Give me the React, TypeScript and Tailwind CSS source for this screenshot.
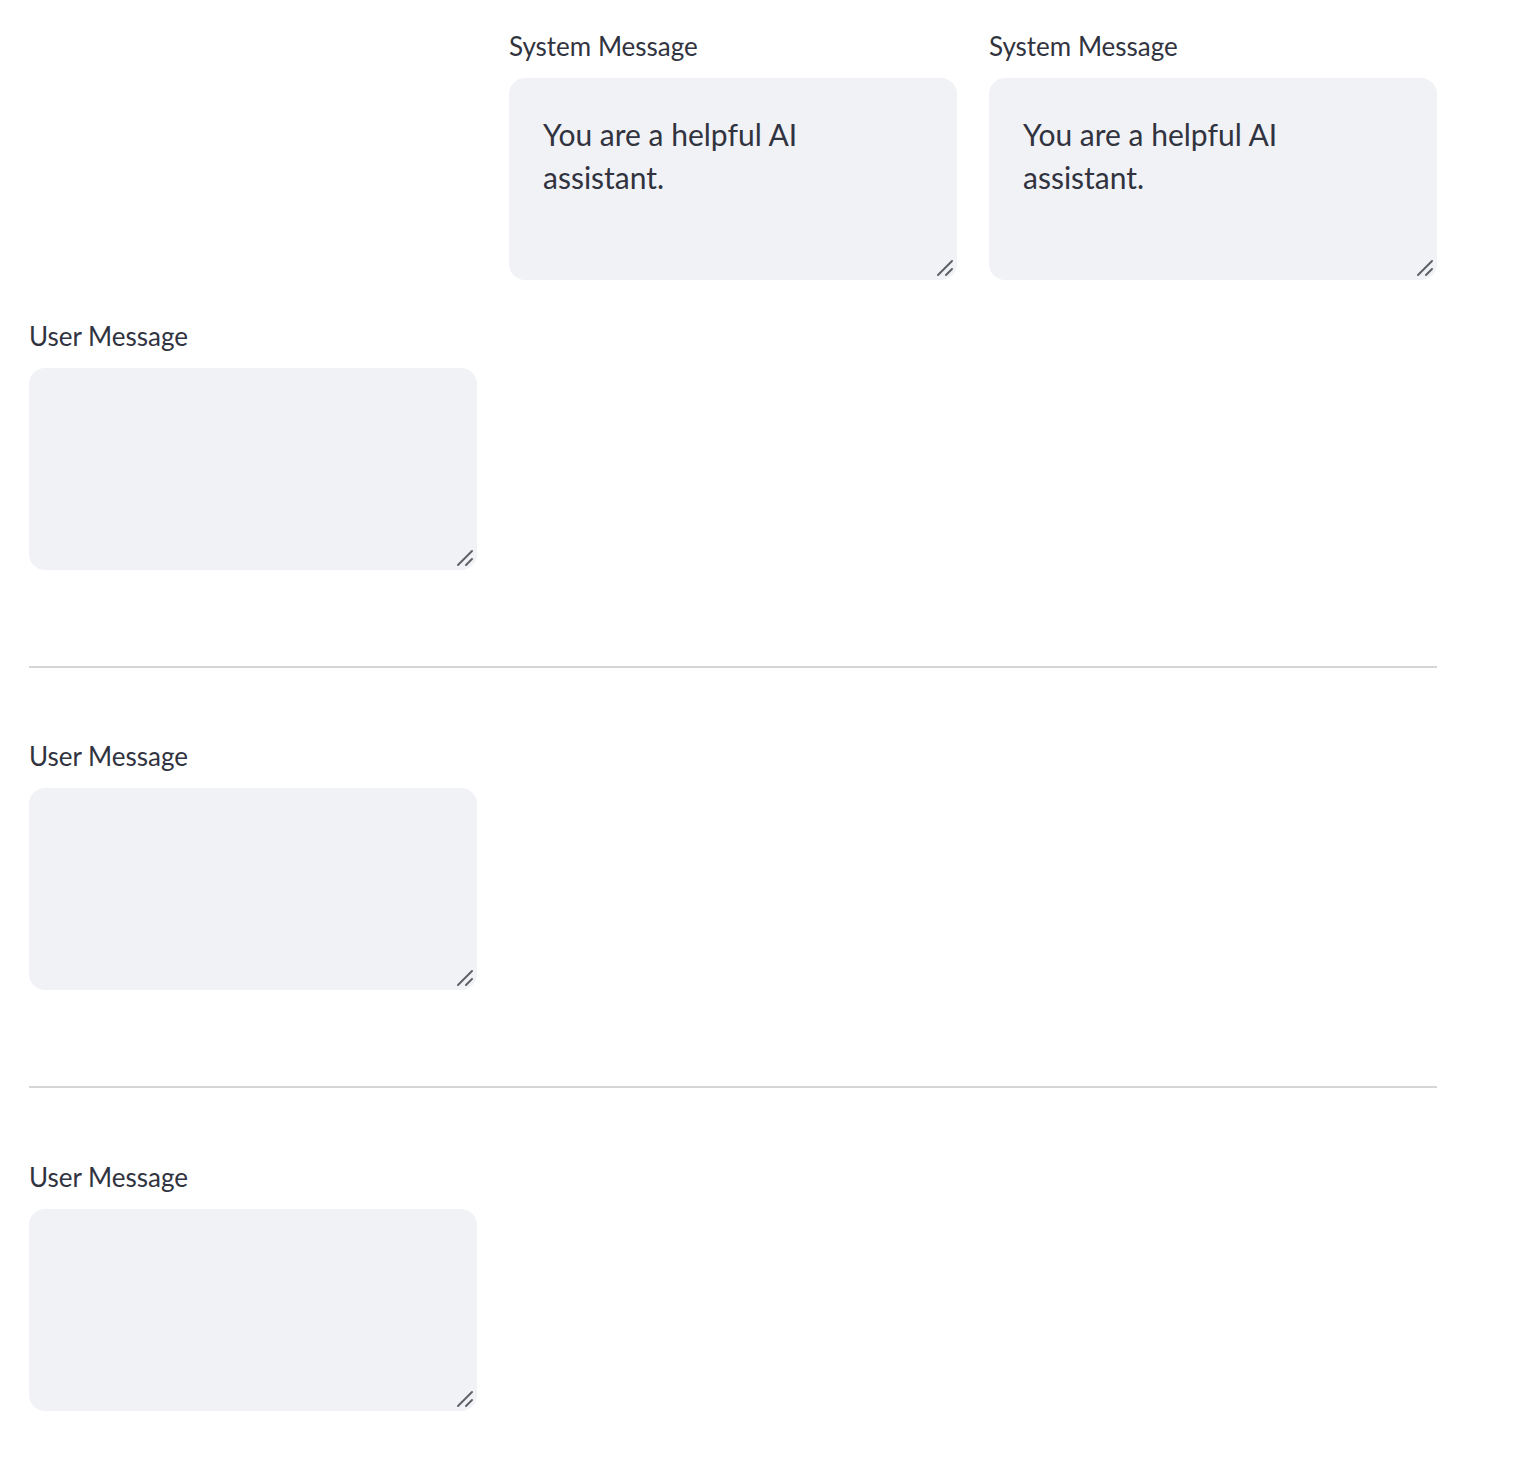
const font = { fontFamily: '"Source Sans Pro", Lato, "Noto Sans", sans-serif' };

function ResizeHandle() {
  return (
    <svg
      className="pointer-events-none absolute bottom-[3px] right-[3px]"
      width="18"
      height="18"
      viewBox="0 0 18 18"
    >
      <line x1="2" y1="16" x2="16" y2="2" stroke="#5f6068" strokeWidth="2" strokeLinecap="round" />
      <line x1="10" y1="16" x2="16" y2="10" stroke="#5f6068" strokeWidth="2" strokeLinecap="round" />
    </svg>
  );
}

function MessageBox({ label, value = "" }: { label: string; value?: string }) {
  return (
    <div className="flex flex-col">
      <label className="h-[44px] text-[26px] leading-[44px] text-[#31333f]">{label}</label>
      <div className="relative mt-[10px] h-[202px]">
        <textarea
          defaultValue={value}
          className="h-full w-full resize-none rounded-2xl bg-[#f0f2f6] pl-[34px] pr-[34px] pt-[35px] text-[30px] leading-[43px] text-[#31333f] outline-none"
          style={font}
        />
        <ResizeHandle />
      </div>
    </div>
  );
}

function Divider() {
  return <hr className="h-[2px] border-0 bg-[#d5d5d8]" />;
}

export default function App() {
  const system = "You are a helpful AI assistant.";
  return (
    <div className="min-h-screen bg-white" style={font}>
      <div className="w-[1408px] pl-[29px] pt-[24px] box-content">
        <div className="grid grid-cols-3 gap-x-8">
          <div />
          <MessageBox label="System Message" value={system} />
          <MessageBox label="System Message" value={system} />
        </div>

        <div className="mt-[34px] grid grid-cols-3 gap-x-8">
          <MessageBox label="User Message" />
        </div>

        <div className="mt-[96px]">
          <Divider />
        </div>

        <div className="mt-[66px] grid grid-cols-3 gap-x-8">
          <MessageBox label="User Message" />
        </div>

        <div className="mt-[96px]">
          <Divider />
        </div>

        <div className="mt-[67px] grid grid-cols-3 gap-x-8">
          <MessageBox label="User Message" />
        </div>
      </div>
    </div>
  );
}
